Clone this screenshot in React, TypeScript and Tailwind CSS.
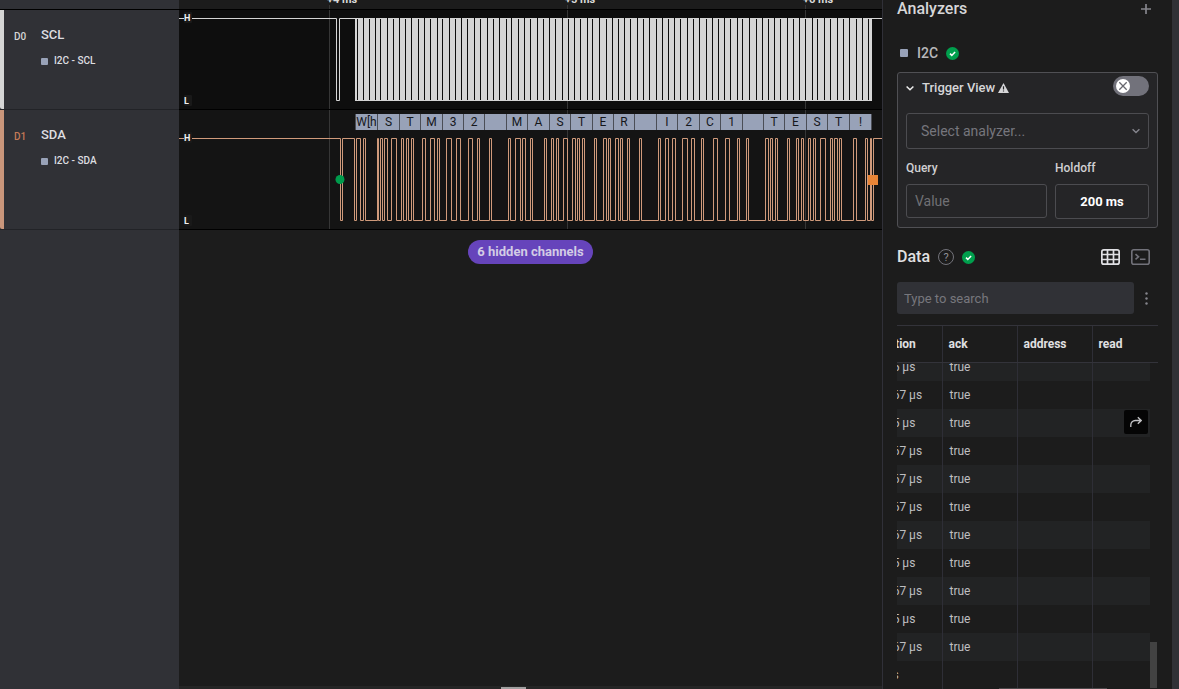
import type { ReactNode } from "react";

const SDA_EDGES = [
  340, 342, 354, 356, 360, 363, 365, 377, 378, 380, 382, 384, 387, 391, 396, 401, 403, 406, 408, 411, 413, 422, 425,
  430, 434, 437, 439, 446, 451, 456, 460, 468, 472, 477, 479, 489, 491, 508, 510, 515, 520, 522, 525, 530, 532, 544,
  546, 551, 553, 556, 558, 563, 567, 572, 575, 577, 579, 582, 584, 594, 596, 603, 606, 608, 610, 615, 618, 620, 622,
  627, 629, 639, 641, 658, 660, 665, 668, 672, 675, 682, 687, 691, 694, 701, 703, 713, 717, 725, 729, 737, 739, 746,
  748, 765, 768, 770, 772, 775, 777, 787, 789, 796, 798, 801, 803, 808, 810, 813, 815, 820, 825, 830, 832, 834, 837,
  839, 841, 853, 856, 865, 867, 870, 871, 873,
];

const SCL_GAPS = [
  357, 363, 369, 375, 380, 387, 393, 399, 405, 411, 418, 424, 430, 437, 442, 449, 455, 461, 467, 474, 480, 487, 493,
  499, 506, 511, 518, 524, 530, 537, 543, 549, 555, 562, 568, 574, 580, 587, 592, 599, 606, 612, 618, 624, 630, 637,
  643, 649, 656, 662, 668, 674, 680, 687, 693, 699, 706, 712, 718, 724, 730, 737, 742, 749, 756, 762, 768, 774, 780,
  787, 793, 799, 805, 812, 817, 824, 830, 837, 843, 849, 856, 862, 868,
];

const FRAME_EDGES = [
  355, 377, 399, 420, 442, 463, 484, 506, 527, 549, 570, 592, 613, 634, 656, 677, 699, 720, 742, 763, 784, 806, 827,
  849, 871,
];
const FRAME_LABELS = ["W[h", ..."STM32 MASTER I2C1 TEST!"];

const RULER = [
  { x: 329, label: "+4 ms" },
  { x: 567, label: "+5 ms" },
  { x: 805, label: "+6 ms" },
];

const ROWS = [
  ["22.5 µs", "true"],
  ["22.67 µs", "true"],
  ["22.5 µs", "true"],
  ["22.67 µs", "true"],
  ["22.67 µs", "true"],
  ["22.67 µs", "true"],
  ["22.67 µs", "true"],
  ["22.5 µs", "true"],
  ["22.67 µs", "true"],
  ["22.5 µs", "true"],
  ["22.67 µs", "true"],
  ["4 µs", ""],
];

function squareWave(edges: number[], high: number, low: number) {
  let level = high;
  let d = `M179 ${high}.5`;
  for (const x of edges) {
    level = level === high ? low : high;
    d += `H${x}.5V${level}.5`;
  }
  return `${d}H2400`;
}

function LevelTag({ y, children }: { y: number; children: string }) {
  return (
    <g>
      <rect x="184" y={y - 6} width="8" height="11" rx="1" fill="#191919" />
      <text x="184" y={y + 3} fontSize="9" fontWeight="700" fill="#f0f0f0">
        {children}
      </text>
    </g>
  );
}

function Waveforms() {
  return (
    <svg
      className="block h-[230px] w-[703px] shrink-0 overflow-visible"
      viewBox="179 0 703 230"
      fontFamily="Roboto, sans-serif"
      role="img"
      aria-label="SCL and SDA signals"
    >
      <rect x="179" y="10" width="2400" height="99" fill="#0e0e0e" />
      <rect x="179" y="110" width="2400" height="119" fill="#141414" />
      {RULER.map((t) => (
        <g key={t.x}>
          <rect x={t.x} y="5" width="1" height="224" fill="#363636" />
          <text x={t.x - 2} y="3" fontSize="11" fontWeight="700" fill="#d8d8d8">
            {t.label}
          </text>
        </g>
      ))}
      <g fill="#000000">
        <rect x="179" y="9" width="2400" height="1" />
        <rect x="179" y="109" width="2400" height="1" />
        <rect x="179" y="229" width="2400" height="1" />
      </g>

      <path d="M179 18.5H336.5V100.5H339.5V18.5H355M872 18.5H2400" fill="none" stroke="#d5d5d5" />
      <rect x="355" y="18" width="517" height="83" fill="#d5d5d5" />
      {SCL_GAPS.map((x, i) => (
        <rect key={x} x={x} y={i % 2 ? 18 : 19} width="1" height={i % 2 ? 82 : 81} fill="#0e0e0e" />
      ))}

      <rect x="355" y="114" width="517" height="16" fill="#98a2b8" />
      {FRAME_EDGES.map((x) => (
        <rect key={x} x={x} y="114" width="1" height="16" fill="#4b4e56" />
      ))}
      {FRAME_LABELS.map((label, i) => (
        <text
          key={i}
          x={(FRAME_EDGES[i] + FRAME_EDGES[i + 1]) / 2 + 0.5}
          y="126"
          fontSize="12"
          textAnchor="middle"
          fill="#15171b"
        >
          {label}
        </text>
      ))}

      <path d={squareWave(SDA_EDGES, 138, 220)} fill="none" stroke="#d09a7b" />
      <circle cx="340" cy="179.5" r="4.5" fill="#009b4c" />
      <rect x="868" y="175" width="10" height="10" fill="#e88537" />
      <LevelTag y={18}>H</LevelTag>
      <LevelTag y={101}>L</LevelTag>
      <LevelTag y={138}>H</LevelTag>
      <LevelTag y={221}>L</LevelTag>
    </svg>
  );
}

function Channel(props: { id: string; name: string; bar: string; idColor: string; height: string }) {
  return (
    <section className={`flex border-b border-[#222327] ${props.height}`}>
      <div className={`w-1 rounded-bl-xs ${props.bar}`} />
      <div className={`w-[37px] pt-5 pl-[10px] text-[10px] leading-[14px] font-medium ${props.idColor}`}>{props.id}</div>
      <div className="pt-[17px]">
        <h2 className="text-[13px] leading-4 font-medium text-[#dedee0]">{props.name}</h2>
        <p className="mt-[11px] flex items-center gap-[6px] text-[10px] leading-[14px] font-medium text-[#dedee0]">
          <span className="size-[7px] rounded-[1px] bg-[#98a2b8]" />
          I2C - {props.name}
        </p>
      </div>
    </section>
  );
}

function Check() {
  return (
    <svg className="size-[13px]" viewBox="0 0 13 13" fill="none" aria-hidden="true">
      <circle cx="6.5" cy="6.5" r="6.5" fill="#009f4d" />
      <path d="M4 6.6l1.8 1.8 3.3-3.5" stroke="#fff" strokeWidth="1.5" />
    </svg>
  );
}

function IconButton({ label, className, children }: { label: string; className: string; children: ReactNode }) {
  return (
    <button type="button" aria-label={label} className={`flex items-center justify-center ${className}`}>
      {children}
    </button>
  );
}

function TriggerView() {
  return (
    <section className="mt-[9px] h-[156px] rounded-[3px] border border-[#505054] bg-[#252527] px-2">
      <header className="flex h-[30px] items-center">
        <button type="button" className="flex items-center text-[13px] leading-4 font-medium text-[#d6d6d8]">
          <svg className="mr-2 size-2" viewBox="0 0 8 8" fill="none" aria-hidden="true">
            <path d="M.6 2.5L4 5.8l3.4-3.3" stroke="#eee" strokeWidth="1.5" />
          </svg>
          Trigger View
          <svg className="ml-[3px] h-[10px] w-[11px]" viewBox="0 0 11 10" aria-hidden="true">
            <path d="M5.5 0L11 10H0z" fill="#d6d6d8" />
            <path d="M5.5 3.3v3.2M5.5 7.4v1.2" stroke="#252527" strokeWidth="1.2" />
          </svg>
        </button>
        <label className="relative mb-1 ml-auto h-5 w-9">
          <input
            type="checkbox"
            role="switch"
            aria-label="Enable trigger view"
            className="block h-5 w-9 appearance-none rounded-full bg-[#72727b]"
          />
          <svg className="absolute top-[3px] left-[3px] size-[14px]" viewBox="0 0 14 14" aria-hidden="true">
            <circle cx="7" cy="7" r="7" fill="#fff" />
            <path d="M3.3 3.3l7.4 7.4M10.7 3.3l-7.4 7.4" stroke="#68686f" strokeWidth="1.3" />
          </svg>
        </label>
      </header>
      <div className="relative mt-[10px]">
        <select
          aria-label="Analyzer"
          className="block h-9 w-full appearance-none rounded-[3px] border border-[#4c4c50] bg-transparent px-[14px] text-sm text-[#76767d]"
        >
          <option>Select analyzer...</option>
        </select>
        <svg className="pointer-events-none absolute top-[14px] right-[9px] size-2" viewBox="0 0 8 8" fill="none" aria-hidden="true">
          <path d="M.6 2.2L4 5.6l3.4-3.4" stroke="#85858d" strokeWidth="1.4" />
        </svg>
      </div>
      <div className="mt-[11px] flex gap-2 text-xs leading-4 font-medium text-[#d0d0d2]">
        <div className="min-w-0 flex-[3]">
          <label htmlFor="query">Query</label>
          <input
            id="query"
            placeholder="Value"
            className="mt-2 block h-[34px] w-full rounded-[3px] border border-[#4c4c50] bg-transparent px-2 text-sm font-normal placeholder:text-[#707074]"
          />
        </div>
        <div className="min-w-0 flex-[2]">
          <label htmlFor="holdoff">Holdoff</label>
          <input
            id="holdoff"
            defaultValue="200 ms"
            className="mt-2 block h-[35px] w-full rounded-[3px] border border-[#4c4c50] bg-transparent text-center text-[13px] font-bold text-white"
          />
        </div>
      </div>
    </section>
  );
}

function DataTable() {
  return (
    <div className="relative mt-[11px] min-h-0 flex-1 overflow-hidden border-t border-[#33333a]">
      <div className="relative z-10 h-[37px] overflow-hidden border-b border-[#33333a] bg-[#1c1c1c]" />
      <div className="absolute inset-0 -left-[31px]">
        <table className="relative z-20 w-full table-fixed border-collapse text-left text-xs">
          <thead className="text-[#e0e0e2]">
            <tr className="h-9">
              <th className="w-[76px] border-r border-[#2e2e36] px-[5px] font-bold">duration</th>
              <th className="w-[75px] border-r border-[#2e2e36] px-[6px] font-bold">ack</th>
              <th className="w-[75px] border-r border-[#2e2e36] px-[6px] font-bold">address</th>
              <th className="px-[6px] font-bold">read</th>
              <th className="w-2 p-0" />
            </tr>
          </thead>
        </table>
        <div className="-mt-[9px] pr-2">
          <table className="w-full table-fixed border-collapse text-left text-xs text-[#bebec0]">
            <tbody>
              {ROWS.map(([duration, ack], i) => (
                <tr key={i} className="h-7 odd:bg-[#222324]">
                  <td className="w-[76px] border-r border-[#2e2e36] pl-[10px] whitespace-nowrap">{duration}</td>
                  <td className="w-[75px] border-r border-[#2e2e36] px-[7px]">{ack}</td>
                  <td className="w-[75px] border-r border-[#2e2e36] px-[7px]" />
                  <td className="relative p-0">
                    {i === 2 && (
                      <IconButton label="Go to frame" className="absolute top-px right-[2px] size-6 rounded-xs bg-[#050505]">
                        <svg className="size-3" viewBox="0 0 12 12" fill="none" stroke="#c4c4c6" strokeWidth="1.3" aria-hidden="true">
                          <path d="M.8 11V9a4.5 4.5 0 0 1 4.5-4.5h5.8M7.8 1.2l3.4 3.3-3.4 3.3" />
                        </svg>
                      </IconButton>
                    )}
                  </td>
                </tr>
              ))}
            </tbody>
          </table>
        </div>
      </div>
      <div className="absolute right-[1px] bottom-[1px] h-[46px] w-[7px] bg-[#424242]" />
      <div className="absolute right-[51px] bottom-0 h-px w-[108px] bg-[#4b484a]" />
    </div>
  );
}

export default function App() {
  return (
    <div className="flex h-screen overflow-hidden bg-[#1c1c1c] font-[Roboto,sans-serif]">
      <aside className="w-[179px] shrink-0 bg-[#303136]">
        <div className="h-[10px] border-b border-black" />
        <Channel id="D0" name="SCL" bar="bg-[#d5d5d5]" idColor="text-[#d5d5d5]" height="h-[100px]" />
        <Channel id="D1" name="SDA" bar="bg-[#c9967b]" idColor="text-[#c47a56]" height="h-[120px]" />
      </aside>

      <main className="flex min-w-0 flex-1 flex-col overflow-hidden">
        <Waveforms />
        <button
          type="button"
          className="mt-[10px] h-6 w-[125px] self-center rounded-full bg-[#6644bb] text-[13px] font-bold whitespace-nowrap text-[#d3cce5]"
        >
          6 hidden channels
        </button>
        <div className="mt-auto flex h-[3px] items-end bg-[#252525]">
          <div className="ml-[322px] h-[2px] w-[25px] bg-[#a0a0a0]" />
        </div>
      </main>

      <aside className="flex w-[290px] shrink-0 flex-col border-l border-[#303038] pr-[14px] pl-[14px]">
        <header className="flex h-[18px] items-center justify-between pr-[6px]">
          <h1 className="text-base leading-5 font-medium text-[#d6d6d8]">Analyzers</h1>
          <IconButton label="Add analyzer" className="size-3">
            <svg className="size-[10px]" viewBox="0 0 10 10" stroke="#85858c" strokeWidth="1.7" aria-hidden="true">
              <path d="M5 0v10M0 5h10" />
            </svg>
          </IconButton>
        </header>
        <div className="mt-[25px] flex h-5 items-center gap-2 pl-[3px]">
          <span className="size-2 rounded-[1px] bg-[#98a2b8]" />
          <span className="ml-px text-sm leading-5 font-medium text-[#b8b8bb]">I2C</span>
          <Check />
        </div>

        <TriggerView />

        <header className="mt-[19px] flex h-5 items-center">
          <h1 className="text-base leading-5 font-medium text-[#e0e0e2]">Data</h1>
          <IconButton
            label="Help"
            className="mr-2 ml-2 size-4 rounded-full border border-[#73737a] text-[11px] leading-none text-[#909096]"
          >
            ?
          </IconButton>
          <Check />
          <IconButton label="Table view" className="mr-[11px] ml-auto h-4 w-[19px]">
            <svg className="h-4 w-[19px]" viewBox="0 0 19 16" fill="none" stroke="#e0e0e4" strokeWidth="1.7" aria-hidden="true">
              <rect x=".85" y=".85" width="17.3" height="14.3" rx="2" />
              <path d="M6.5 1v14M12.5 1v14M1 5.5h17M1 10.5h17" />
            </svg>
          </IconButton>
          <IconButton label="Terminal view" className="mr-2 h-4 w-[19px]">
            <svg className="h-4 w-[19px]" viewBox="0 0 19 16" fill="none" stroke="#72727a" strokeWidth="1.6" aria-hidden="true">
              <rect x=".8" y=".8" width="17.4" height="14.4" rx="2" />
              <path d="M4.5 5.2l3 2.6-3 2.6M9 10.3h5.5" />
            </svg>
          </IconButton>
        </header>

        <div className="mt-[15px] flex items-center">
          <input
            aria-label="Search data"
            placeholder="Type to search"
            className="h-8 min-w-0 flex-1 rounded-[3px] bg-[#303136] px-[7px] text-[13px] placeholder:text-[#77777d]"
          />
          <IconButton label="More options" className="h-8 w-6">
            <svg className="h-[13px] w-[3px]" viewBox="0 0 3 13" fill="#85858c" aria-hidden="true">
              <circle cx="1.5" cy="1.5" r="1.2" />
              <circle cx="1.5" cy="6.5" r="1.2" />
              <circle cx="1.5" cy="11.5" r="1.2" />
            </svg>
          </IconButton>
        </div>

        <DataTable />
      </aside>
      <div className="w-[7px] shrink-0 bg-[#303136]" />
    </div>
  );
}
